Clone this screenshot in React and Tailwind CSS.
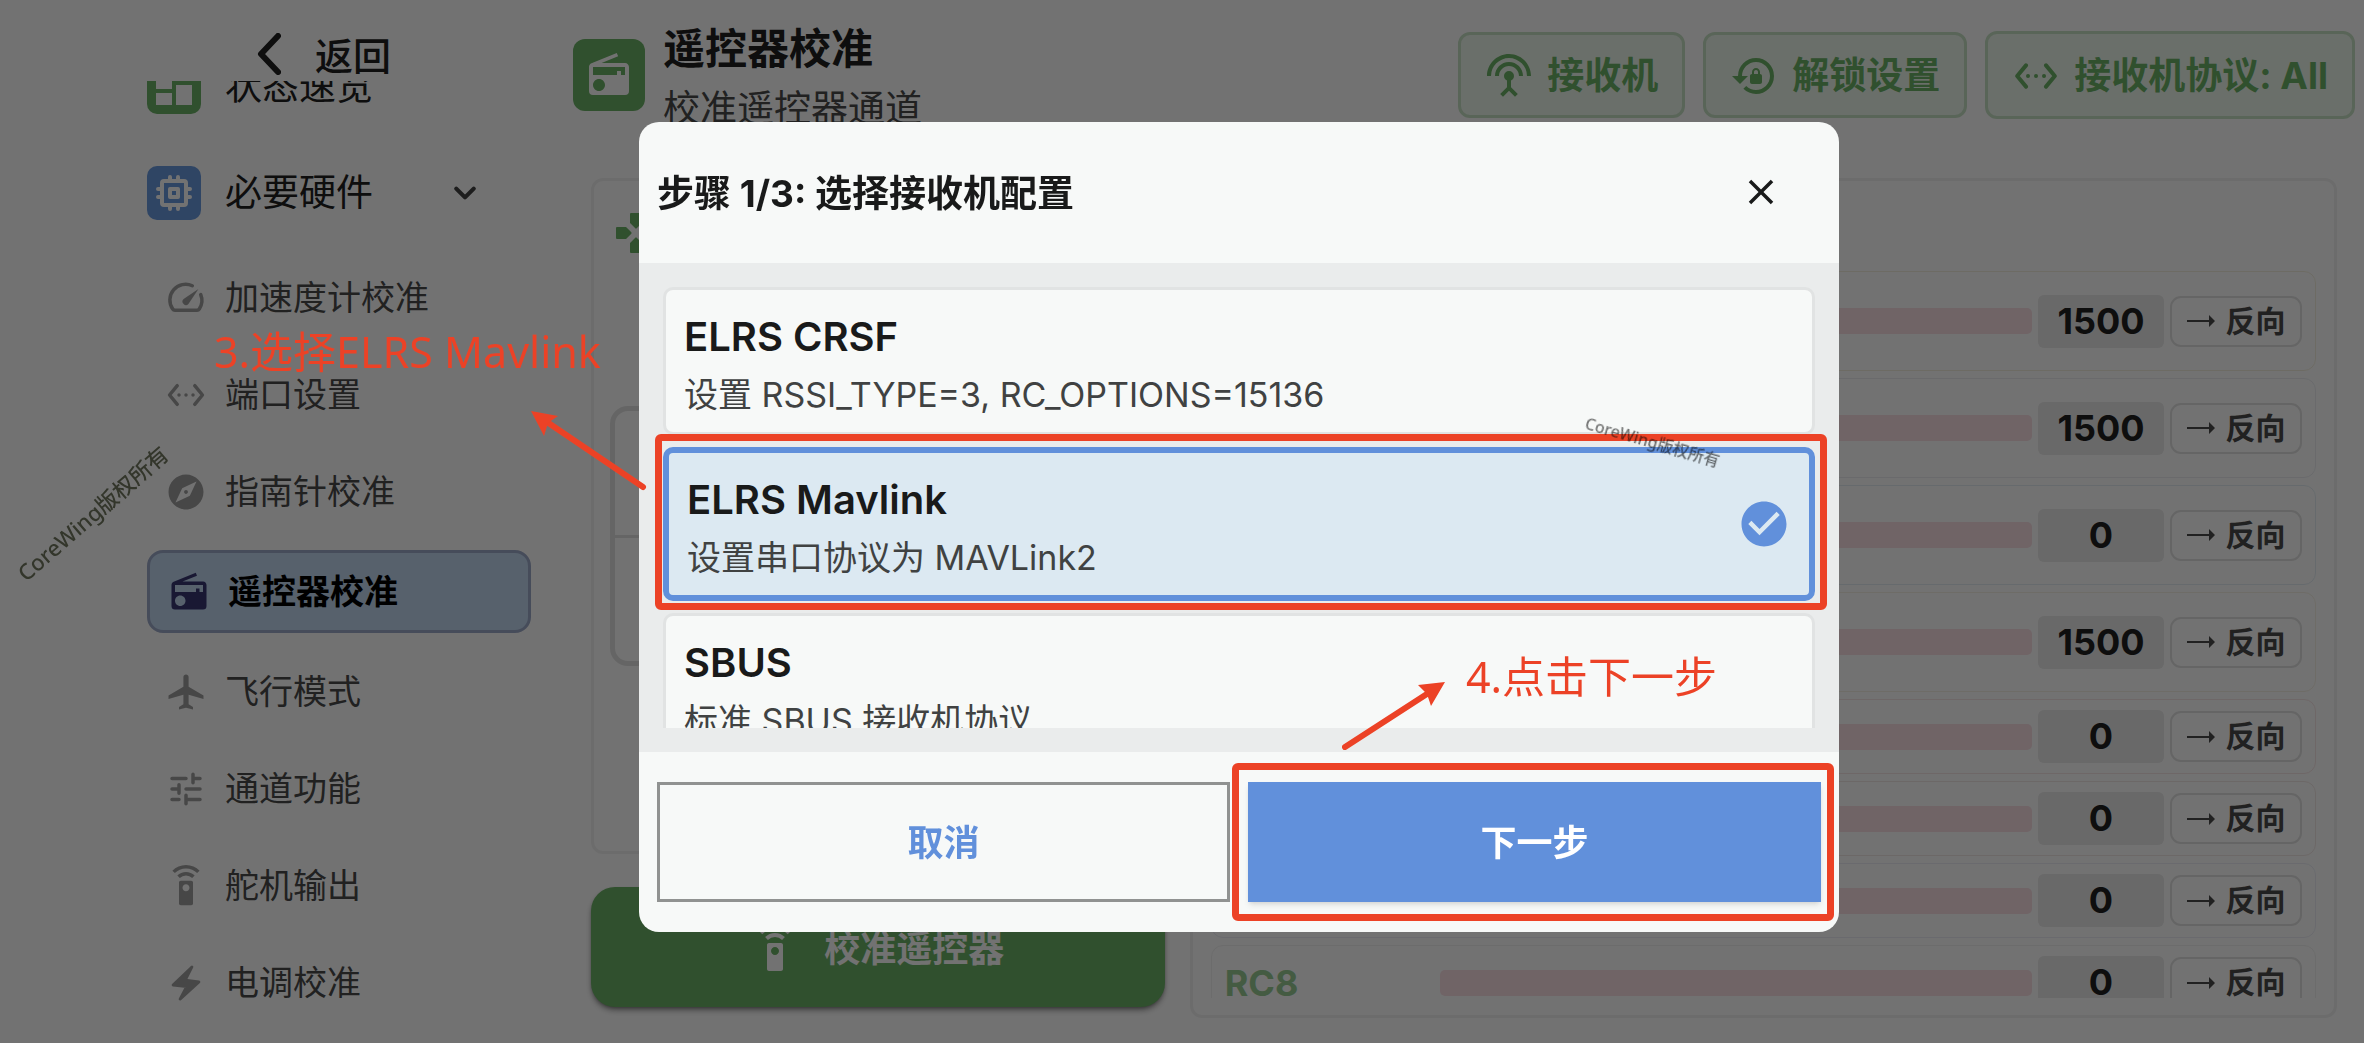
import { useState } from "react";
import {
  MdAirplanemodeActive,
  MdCheckCircle,
  MdClose,
  MdDashboard,
  MdExplore,
  MdLockReset,
  MdRadio,
  MdSettingsInputAntenna,
  MdSettingsRemote,
} from "react-icons/md";

function EthernetIcon({ className }) {
  return (
    <svg viewBox="0 0 24 24" className={className} fill="none" stroke="currentColor" strokeWidth="2" strokeLinecap="round" strokeLinejoin="round">
      <path d="M7 6.7 2.6 12 7 17.3M17 6.7 21.4 12 17 17.3" />
      <path d="M8 12h.01M12 12h.01M16 12h.01" />
    </svg>
  );
}

function SpeedIcon({ className }) {
  return (
    <svg viewBox="0 0 24 24" className={className} fill="currentColor">
      <path
        d="M15.6 5A9 9 0 0 0 4.4 18.3a1.5 1.5 0 0 0 1.3.7h12.6a1.5 1.5 0 0 0 1.3-.7A9 9 0 0 0 20.4 10"
        fill="none"
        stroke="currentColor"
        strokeWidth="2"
        strokeLinecap="round"
      />
      <path d="M10.6 15.4a2 2 0 0 0 2.8 0l5.7-8.5-8.5 5.7a2 2 0 0 0 0 2.8z" />
    </svg>
  );
}

function TuneIcon({ className }) {
  return (
    <svg viewBox="0 0 24 24" className={className} fill="none" stroke="currentColor" strokeWidth="2" strokeLinecap="round">
      <path d="M4 6h8M16 6h4M16 3.6v4.8M4 12h4M8 9.6v4.8M12 12h8M4 18h4M12 18h8M12 15.6v4.8" />
    </svg>
  );
}

function BoltIcon({ className }) {
  return (
    <svg viewBox="0 0 24 24" className={className} fill="currentColor" stroke="currentColor" strokeWidth="1.6" strokeLinejoin="round">
      <path d="M15.4 2.8 4.6 13.2 12.4 14 8.6 21.2 19.4 11.4 11.6 10.4z" />
    </svg>
  );
}

function ChipIcon({ className }) {
  return (
    <svg viewBox="0 0 24 24" className={className} fill="none" stroke="currentColor" strokeWidth="2" strokeLinecap="round" strokeLinejoin="round">
      <rect x="6" y="6" width="12" height="12" rx="1" />
      <path d="M10 10h4v4h-4z" />
      <path d="M10 4v2M14 4v2M10 18v2M14 18v2M4 10h2M4 14h2M18 10h2M18 14h2" />
    </svg>
  );
}

function GamepadIcon({ className }) {
  return (
    <svg viewBox="0 0 24 24" className={className} fill="currentColor" stroke="currentColor" strokeWidth="1" strokeLinejoin="round">
      <path d="M9.5 2.5h5v4.3L12 9.3 9.5 6.8zM2.5 9.5h4.3L9.3 12l-2.5 2.5H2.5zM9.5 21.5h5v-4.3L12 14.7l-2.5 2.5zM21.5 9.5h-4.3L14.7 12l2.5 2.5h4.3z" />
    </svg>
  );
}

const navItems = [
  { name: "加速度计校准", icon: SpeedIcon },
  { name: "端口设置", icon: EthernetIcon },
  { name: "指南针校准", icon: MdExplore },
  { name: "遥控器校准", icon: MdRadio },
  { name: "飞行模式", icon: MdAirplanemodeActive },
  { name: "通道功能", icon: TuneIcon },
  { name: "舵机输出", icon: MdSettingsRemote },
  { name: "电调校准", icon: BoltIcon },
];

const channels = [
  { name: "RC1", value: 1500, size: "h-[100px]", border: "border-[#eeeada]" },
  { name: "RC2", value: 1500, size: "h-[100px]", border: "border-[#e6e8ec]" },
  { name: "RC3", value: 0, size: "h-[100px]", border: "border-[#dfe8ee]" },
  { name: "RC4", value: 1500, size: "h-[100px]", border: "border-[#f0ebe0]" },
  { name: "RC5", value: 0, size: "h-[75px]", border: "border-[#f0e0e0]" },
  { name: "RC6", value: 0, size: "h-[75px]", border: "border-[#ece2e0]" },
  { name: "RC7", value: 0, size: "h-[75px]", border: "border-[#e6e8f0]" },
  { name: "RC8", value: 0, size: "h-[75px]", border: "border-[#ebebeb]" },
];

const receivers = [
  { id: "crsf", name: "ELRS CRSF", note: "设置 RSSI_TYPE=3, RC_OPTIONS=15136" },
  { id: "mavlink", name: "ELRS Mavlink", note: "设置串口协议为 MAVLink2" },
  { id: "sbus", name: "SBUS", note: "标准 SBUS 接收机协议" },
];

function Sidebar() {
  return (
    <aside className="flex w-[384px] shrink-0 flex-col">
      <header className="flex h-[81px] shrink-0 items-end pl-[110px]">
        <button className="flex items-center gap-[34px] text-[38px] leading-[50px] font-medium text-[#202020]">
          <svg viewBox="0 0 24 42" className="mb-1 h-[42px] w-[24px]" fill="none" stroke="currentColor" strokeWidth="6" strokeLinecap="round" strokeLinejoin="round">
            <path d="M21 3 4 21l17 18" />
          </svg>
          返回
        </button>
      </header>

      <nav className="min-h-0 flex-1 overflow-hidden">
        <div className="-mt-[34px] flex flex-col gap-[26px]">
          <a href="#overview" className="flex h-[80px] items-center gap-[24px] text-[37px] text-[#202020]">
            <span className="grid size-[54px] place-items-center rounded-[10px] bg-[#69ae64]">
              <MdDashboard className="size-[48px] text-[#f9f9f9]" />
            </span>
            状态速览
          </a>
          <button className="flex h-[80px] items-center gap-[24px] pr-[45px] text-[37px] text-[#202020]">
            <span className="grid size-[54px] place-items-center rounded-[10px] bg-[#6696db]">
              <ChipIcon className="size-[48px] text-[#f9f9f9]" />
            </span>
            必要硬件
            <svg viewBox="0 0 24 24" className="ml-auto size-[42px] text-[#404040]" fill="none" stroke="currentColor" strokeWidth="2.4" strokeLinecap="round" strokeLinejoin="round">
              <path d="m7 9.5 5 5 5-5" />
            </svg>
          </button>

          <ul className="flex flex-col gap-[20px]">
            {navItems.map(({ name, icon: Icon }) => {
              const active = name === "遥控器校准";
              return (
                <li key={name}>
                  <a
                    href="#section"
                    className={
                      active
                        ? "flex h-[83px] items-center gap-[18px] rounded-[16px] border-3 border-[#9aa6c4] bg-[#bdd3ec] px-[18px] text-[34px] font-bold text-black"
                        : "flex h-[77px] items-center gap-[18px] px-[18px] text-[34px] text-[#484848]"
                    }
                  >
                    <Icon className={active ? "size-[42px] text-[#373570]" : "size-[42px] text-[#9c9c9c]"} />
                    {name}
                  </a>
                </li>
              );
            })}
          </ul>
        </div>
      </nav>
    </aside>
  );
}

function HeaderButton({ icon: Icon, children, tall }) {
  return (
    <button
      className={`${tall ? "h-[88px]" : "h-[86px]"} flex items-center gap-[14px] rounded-[12px] border-3 border-[#c3dcc1] bg-[#e8f1e7] px-[24px] pt-[2px] text-[37px] font-bold text-[#69ae64]`}
    >
      <Icon className="size-[48px]" />
      {children}
    </button>
  );
}

function MainHeader() {
  return (
    <header className="flex h-[150px] shrink-0 items-center">
      <span className="grid size-[72px] place-items-center rounded-[12px] bg-[#69ae64]">
        <MdRadio className="size-[48px] text-[#f9f9f9]" />
      </span>
      <div className="ml-[18px] pt-[7px]">
        <h1 className="text-[42px] leading-[60px] font-bold text-[#202020]">遥控器校准</h1>
        <p className="text-[37px] leading-[60px] text-[#484848]">校准遥控器通道</p>
      </div>
      <div className="ml-auto flex items-center gap-[18px]">
        <HeaderButton icon={MdSettingsInputAntenna}>接收机</HeaderButton>
        <HeaderButton icon={MdLockReset}>解锁设置</HeaderButton>
        <HeaderButton icon={EthernetIcon} tall>接收机协议: All</HeaderButton>
      </div>
    </header>
  );
}

function Stick() {
  return (
    <div className="flex h-[260px] flex-1 items-center rounded-[18px] border-5 border-[#dcdcdc]">
      <div className="h-[3px] w-full bg-[#dcdcdc]" />
    </div>
  );
}

function ChannelRow({ name, value, size, border }) {
  return (
    <li className={`${size} ${border} flex shrink-0 items-center gap-[6px] rounded-[12px] border px-[13px]`}>
      <span className="w-[209px] text-[36px] font-bold text-[#94c690]">{name}</span>
      <div className="h-[26px] flex-1 rounded-[5px] bg-[#f3d9df]" />
      <output className="w-[126px] rounded-[6px] bg-[#e4e4e4] text-center text-[36px] leading-[53px] font-bold text-[#202020]">
        {value}
      </output>
      <button className="flex h-[51px] w-[132px] items-center justify-center gap-[11px] rounded-[11px] border-2 border-[#dcdcdc] text-[30px] font-bold text-[#484848]">
        <svg viewBox="0 0 28 12" className="h-[12px] w-[28px]" fill="currentColor">
          <path d="M0 5h22V0l6 6-6 6V7H0z" />
        </svg>
        反向
      </button>
    </li>
  );
}

function Annotations() {
  return (
    <div className="pointer-events-none text-[43px] leading-[54px] whitespace-nowrap text-[#ec4226] font-['Noto_Sans','Noto_Sans_CJK_SC',sans-serif]">
      <div className="absolute top-[312px] right-[12px] left-[16px] h-[176px] rounded-[6px] border-7 border-[#ec4226]" />
      <p className="absolute top-[203px] left-[-425px]">3.选择ELRS Mavlink</p>
      <p className="absolute top-[528px] left-[827px]">4.点击下一步</p>
      <svg viewBox="0 0 114 78" className="absolute top-[289px] left-[-108px] h-[78px] w-[114px] overflow-visible" fill="currentColor">
        <path d="M112 76 16 11" stroke="currentColor" strokeWidth="6" strokeLinecap="round" />
        <path d="M0 0 27 5 17 12 13 25z" />
      </svg>
      <svg viewBox="0 0 101 66" className="absolute top-[560px] left-[705px] h-[66px] w-[101px] overflow-visible" fill="currentColor">
        <path d="M1 65 86 10" stroke="currentColor" strokeWidth="6" strokeLinecap="round" />
        <path d="M101 0 74 3 83 12 87 24z" />
      </svg>
      <p className="absolute top-[308px] left-[944px] origin-center rotate-16 text-[16px] leading-[24px] font-medium text-black/55">
        CoreWing版权所有
      </p>
      <p className="absolute top-[375px] left-[-642px] origin-center rotate-[-41deg] text-[22px] leading-[32px] font-medium text-[#33362b]">
        CoreWing版权所有
      </p>
    </div>
  );
}

function ReceiverDialog() {
  const [selected, setSelected] = useState("mavlink");

  return (
    <div className="fixed inset-0 flex items-center justify-center bg-black/54 pt-[10px] pl-[114px]">
      <div role="dialog" aria-labelledby="dialog-title" className="relative w-[1200px]">
        <div className="overflow-hidden rounded-[20px] bg-[#f7f9f8]">
          <header className="flex h-[141px] items-center justify-between pr-[57px] pl-[18px]">
            <h2 id="dialog-title" className="pt-[3px] text-[37px] font-bold text-[#191a1a]">步骤 1/3: 选择接收机配置</h2>
            <button aria-label="关闭">
              <MdClose className="size-[42px] text-[#191a1a]" />
            </button>
          </header>

          <div className="bg-[#eaecec] p-[24px]">
            <div className="flex h-[441px] flex-col gap-[12px] overflow-hidden">
              {receivers.map(({ id, name, note }) => {
                const active = selected === id;
                return (
                  <label
                    key={id}
                    className={
                      active
                        ? "flex shrink-0 items-center justify-between rounded-[10px] border-6 border-[#6190db] bg-[#dce9f2] px-[18px]"
                        : "flex shrink-0 items-center justify-between rounded-[10px] border-3 border-[#e1e3e3] bg-[#f7f9f8] px-[18px]"
                    }
                  >
                    <input
                      type="radio"
                      name="receiver"
                      className="sr-only"
                      checked={active}
                      onChange={() => setSelected(id)}
                    />
                    <span className="pt-[18px] pb-[8px]">
                      <span className="block text-[40px] leading-[58px] font-semibold text-[#191a1a]">{name}</span>
                      <span className="block text-[34px] leading-[58px] text-[#404242]">{note}</span>
                    </span>
                    {active && <MdCheckCircle className="size-[54px] text-[#6190db]" />}
                  </label>
                );
              })}
            </div>
          </div>

          <footer className="grid grid-cols-2 gap-[18px] px-[18px] py-[30px] text-[36px] font-bold">
            <button className="h-[120px] border-3 border-[#909291] pt-[3px] text-[#6190db]">取消</button>
            <button className="relative h-[120px] bg-[#6190db] pt-[3px] text-white shadow-md">
              下一步
              <span className="absolute -top-[19px] -right-[13px] -bottom-[19px] -left-[16px] rounded-[6px] border-7 border-[#ec4226]" />
            </button>
          </footer>
        </div>
        <Annotations />
      </div>
    </div>
  );
}

export default function App() {
  return (
    <div className="flex h-screen gap-[42px] overflow-hidden bg-[#f9f9f9] pr-[9px] pl-[147px] font-[Inter,'Noto_Sans_CJK_SC',sans-serif]">
      <Sidebar />
      <main className="flex min-w-0 flex-1 flex-col">
        <MainHeader />
        <div className="mt-[28px] mb-[25px] grid min-h-0 flex-1 grid-cols-[1fr_2fr] gap-[25px] px-[18px]">
          <div className="flex min-h-0 flex-col gap-[33px] pb-[11px]">
            <section className="flex-1 rounded-[12px] border-3 border-[#ebebeb] px-[16px] pt-[28px]">
              <GamepadIcon className="ml-[2px] size-[48px] text-[#69ae64]" />
              <div className="mt-[149px] flex gap-[18px]">
                <Stick />
                <Stick />
              </div>
            </section>
            <button className="flex h-[120px] shrink-0 items-center justify-center gap-[25px] rounded-[24px] bg-[#69ae64] pt-[3px] text-[36px] font-bold text-[#f9f9f9] shadow-md shadow-black/40">
              <MdSettingsRemote className="size-[48px]" />
              校准遥控器
            </button>
          </div>
          <section className="flex min-h-0 flex-col rounded-[12px] border-3 border-[#ebebeb] px-[18px] pt-[90px] pb-[17px]">
            <ul className="flex min-h-0 flex-1 flex-col gap-[7px] overflow-hidden">
              {channels.map((channel) => (
                <ChannelRow key={channel.name} {...channel} />
              ))}
            </ul>
          </section>
        </div>
      </main>
      <ReceiverDialog />
    </div>
  );
}
